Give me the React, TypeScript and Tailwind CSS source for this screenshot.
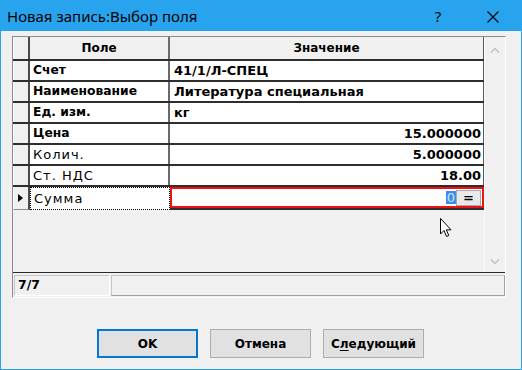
import React from "react";

type Row = { field: string; value: string; right?: boolean; thin?: boolean };

const rows: Row[] = [
  { field: "Счет", value: "41/1/Л-СПЕЦ" },
  { field: "Наименование", value: "Литература специальная" },
  { field: "Ед. изм.", value: "кг" },
  { field: "Цена", value: "15.000000", right: true },
  { field: "Колич.", value: "5.000000", right: true, thin: true },
  { field: "Ст. НДС", value: "18.00", right: true, thin: true },
];

function Chevron({ up }: { up?: boolean }) {
  return (
    <svg width="10" height="6" viewBox="0 0 10 6" className="block">
      <path
        d={up ? "M1 5.5 L5 1.5 L9 5.5" : "M1 0.5 L5 4.5 L9 0.5"}
        fill="none"
        stroke="#c2c2c2"
        strokeWidth="1.4"
      />
    </svg>
  );
}

function Cursor() {
  return (
    <svg width="13" height="20" viewBox="0 0 13 20" className="absolute left-[439px] top-[218px]">
      <path
        d="M0.5 0.5 L0.5 16 L4 12.5 L6.5 18.5 L8.8 17.5 L6.3 11.8 L11 11.8 Z"
        fill="#fff"
        stroke="#000"
        strokeWidth="1"
        strokeLinejoin="miter"
      />
    </svg>
  );
}

export default function App() {
  return (
    <div className="relative w-[522px] h-[370px] flex flex-col bg-[#f0f0f0] border border-t-0 border-[#28a4ef] font-['DejaVu_Sans',sans-serif] text-black">
      {/* title bar */}
      <div className="h-[31px] shrink-0 flex items-center pt-[2px] pl-[6px] pr-[22px] bg-[#28a4ef] font-['Noto_Sans',sans-serif] text-[15px]">
        <span className="flex-1 leading-none">Новая запись:Выбор поля</span>
        <span className="w-[14px] text-center leading-none">?</span>
        <svg width="12" height="12" viewBox="0 0 12 12" className="ml-[42px]">
          <path d="M0.5 0.5 L11.5 11.5 M11.5 0.5 L0.5 11.5" stroke="#000" strokeWidth="1.1" />
        </svg>
      </div>

      {/* grid */}
      <div className="pl-[11px] pt-[5px]">
        <div className="w-[494px] h-[262px] flex flex-col border-l border-t border-[#8c8c8c] border-r border-b border-r-white border-b-white">
          <div className="h-[236px] flex">
            <div className="w-[471px] flex flex-col text-[12px] font-bold">
              {/* header */}
              <div className="h-[24px] flex border-b-2 border-[#2e2e2e]">
                <div className="w-[17px] bg-[#f0f0f0] border-l border-white border-r-2 border-r-[#4a4a4a]" />
                <div className="w-[140px] flex items-center justify-center border-r-2 border-[#6a6a6a]">Поле</div>
                <div className="flex-1 flex items-center justify-center border-r border-[#5a5a5a]">Значение</div>
              </div>
              {rows.map((r) => (
                <div key={r.field} className="h-[21px] flex border-b-2 border-[#2e2e2e]">
                  <div className="w-[17px] bg-[#f0f0f0] border-l border-white border-r-2 border-r-[#4a4a4a]" />
                  <div
                    className={`w-[140px] flex items-center pl-[3px] bg-white border-r-2 border-[#6a6a6a] overflow-hidden whitespace-nowrap ${
                      r.thin ? "font-normal text-[13px] tracking-[1px]" : "text-[12.3px]"
                    }`}
                  >
                    {r.field}
                  </div>
                  <div
                    className={`flex-1 flex items-center bg-white border-r border-[#5a5a5a] text-[13px] ${
                      r.right ? "justify-end pr-[2px]" : "pl-[4px]"
                    }`}
                  >
                    {r.value}
                  </div>
                </div>
              ))}
              {/* current row */}
              <div className="h-[23px] flex">
                <div className="w-[17px] flex items-center pl-[4px] bg-[#f0f0f0] border-l border-white border-r-2 border-r-[#4a4a4a] border-b border-b-[#8c8c8c]">
                  <svg width="5" height="8" viewBox="0 0 5 8">
                    <path d="M0 0 L5 4 L0 8 Z" fill="#000" />
                  </svg>
                </div>
                <div className="w-[140px] flex items-center pl-[3px] bg-white border border-dotted border-black font-normal text-[13px] tracking-[1px]">
                  Сумма
                </div>
                <div className="flex-1 border-b-2 border-[#2e2e2e]">
                  <div className="h-[21px] flex items-center justify-end pr-[1px] bg-white border-2 border-[#ee1111]">
                    <span className="h-[13px] px-[1px] flex items-center bg-[#3b8fe8] text-[#cfe4ff] font-normal text-[13px] leading-none">
                      0
                    </span>
                    <span className="w-[25px] h-[16px] flex items-center justify-center bg-[#e9e9e9] border border-[#a9a9a9] text-[13px] leading-none">
                      =
                    </span>
                  </div>
                </div>
              </div>
              <div className="flex-1 bg-[#f0f0f0]" />
            </div>
            {/* scrollbar */}
            <div className="flex-1 flex flex-col items-center justify-between pt-[10px] pb-[7px] bg-[#f0f0f0] border-l border-[#fafafa]">
              <Chevron up />
              <Chevron />
            </div>
          </div>
          {/* status */}
          <div className="flex-1 flex gap-px pl-[1px] pt-[2px] pb-[1px] border-t border-[#2a2a2a]">
            <div className="w-[96px] flex items-center pl-[3px] text-[12.5px] font-bold border border-[#c8c8c8] border-r-white border-b-white">
              7/7
            </div>
            <div className="flex-1 border border-[#c8c8c8] border-r-[#a0a0a0] border-b-[#a0a0a0]" />
          </div>
        </div>
      </div>

      {/* buttons */}
      <div className="flex gap-[12px] pl-[96px] mt-[31px] text-[12px] font-bold">
        <button className="w-[101px] h-[29px] bg-[#e1e1e1] border-2 border-[#0078d7]">OK</button>
        <button className="w-[101px] h-[29px] bg-[#e1e1e1] border border-[#adadad]">Отмена</button>
        <button className="w-[101px] h-[29px] bg-[#e1e1e1] border border-[#adadad]">
          С<span className="underline underline-offset-2">л</span>едующий
        </button>
      </div>

      <Cursor />
    </div>
  );
}
